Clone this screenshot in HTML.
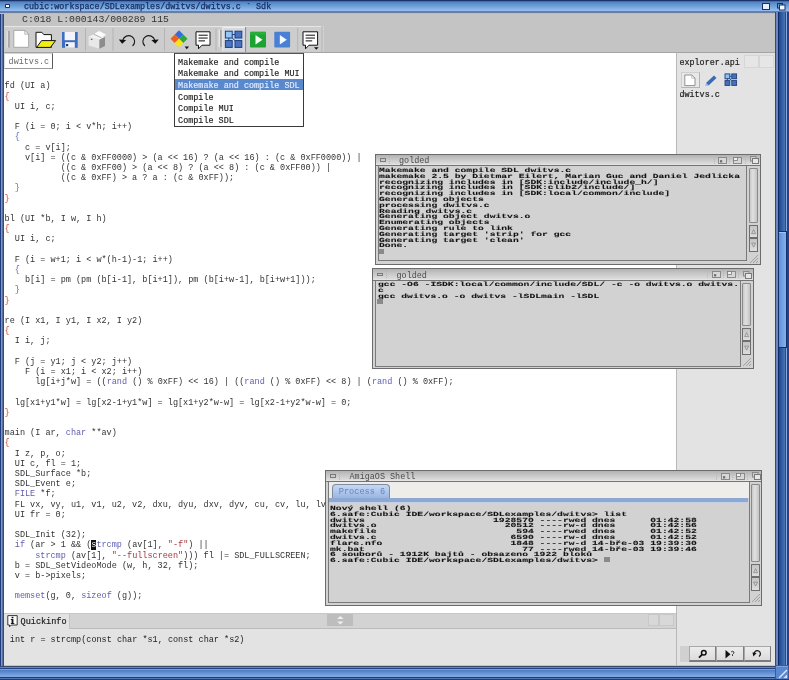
<!DOCTYPE html>
<html><head><meta charset="utf-8">
<style>
*{margin:0;padding:0;box-sizing:border-box}
html,body{width:789px;height:680px;overflow:hidden;background:#c4c4c4;font-family:"Liberation Mono",monospace}
.a{position:absolute}
pre{font-family:"Liberation Mono",monospace;white-space:pre}
/* main window frame */
#title{left:0;top:0;width:789px;height:13.5px;background:linear-gradient(#183470 0,#183470 1px,#5878b0 1.6px,#5a8cc4 3px,#6aa0dc 6px,#90b8ec 10px,#98bcf0 11px,#6a7ea0 11.4px,#6a7ea0 12.6px,#bcbcc8 13.2px)}
#lb{left:0;top:13px;width:4px;height:667px;background:linear-gradient(90deg,#1e3c80 0,#1e3c80 1px,#7898cc 1px,#7898cc 2.3px,#5a70a0 2.3px,#5a70a0 3.3px,#404a68 3.3px)}
#rb{left:775px;top:12px;width:14px;height:653px;background:linear-gradient(90deg,#3c4868 0,#3c4868 1px,#7088b8 1px,#7088b8 3px,#0c2c6a 3px,#0c2c6a 4px,#1a4890 4px,#4a74b4 10px,#2a4a90 10px,#2a4a90 11px,#88a8e0 11px,#88a8e0 12.5px,#2a4080 12.5px)}
#knob{left:778px;top:231.4px;width:9px;height:117px;border:1px solid #10306e;background:linear-gradient(#a0c4f8,#a0c4f8 1px,transparent 1px),linear-gradient(90deg,#6090d8,#8ab0ec)}
#bb{left:0;top:665.5px;width:775px;height:14.5px;background:linear-gradient(#3a4868 0,#3a4868 1px,#6a84b8 1px,#6a84b8 2px,#22448a 2px,#22448a 3px,#7aa0e0 3px,#7aa0e0 4px,#4e7cc4 4px,#78a2e0 9.5px,#80a8e8 10.5px,#1a3a80 10.5px,#1a3a80 12px,#5a78b0 12px,#5a78b0 13px,#1e3c80 13px)}
#status{left:4px;top:12px;width:771px;height:14px;background:#c4c4c4}
#toolbar{left:4px;top:26px;width:771px;height:27px;background:#c4c4c4;border-bottom:1px solid #a4a4a4}
#editor{left:4px;top:53px;width:672px;height:560px;background:#fff}
#explorer{left:676px;top:53px;width:99px;height:612px;background:#e3e3e3;border-left:1px solid #b8b8b8}
#qinfo{left:4px;top:613px;width:672px;height:52px;background:#e3e3e3;border-top:1px solid #c8c8c8}
.code{left:4.6px;top:81.3px;font-size:8.5px;line-height:10.21px;color:#333}
.k{color:#6060b0}.s{color:#a83a3a}.r{color:#c24a36}.b{color:#5a68b8}
</style></head><body><div id="root" style="position:absolute;left:0;top:0;width:789px;height:680px;will-change:transform;background:#c4c4c4">
<div id="lb" class="a"></div>
<div id="status" class="a"></div>
<div id="toolbar" class="a"></div>
<div id="editor" class="a"></div>
<div id="explorer" class="a"></div>
<div id="qinfo" class="a"></div>
<div id="title" class="a"></div>

<div class="a" style="left:4.8px;top:3.7px;width:5.2px;height:4.1px;background:#1a2f6a;border-radius:1px"></div>
<div class="a" style="left:5.7px;top:4.7px;width:3.6px;height:2px;background:#f4f8ff"></div>
<pre class="a" style="left:24px;top:1.8px;font-size:8.42px;line-height:10px;color:#162e66;-webkit-text-stroke:0.25px #162e66">cubic:workspace/SDLexamples/dwitvs/dwitvs.c ` Sdk</pre>
<svg class="a" style="left:755px;top:0" width="34" height="12">
 <rect x="762.5" y="3.5" width="7" height="6" transform="translate(-755 0)" fill="#e8eef8" stroke="#1a2f6a" stroke-width="1"/>
 <rect x="777.5" y="3.5" width="5" height="4.5" transform="translate(-755 0)" fill="none" stroke="#1a2f6a" stroke-width="1"/>
 <rect x="779.5" y="5" width="5.5" height="5" transform="translate(-755 0)" fill="#f4f8ff" stroke="#1a2f6a" stroke-width="1"/>
</svg>
<pre class="a" style="left:22px;top:14.3px;font-size:9.8px;line-height:12px;color:#333">C:018 L:000143/000289 115</pre>

<svg class="a" style="left:0;top:24px" width="330" height="30" viewBox="0 24 330 30">
 <!-- group box top highlight and right edge -->
 <rect x="4" y="26" width="318" height="26" fill="#cdcdcd"/>
 <line x1="4" y1="26.5" x2="322" y2="26.5" stroke="#e6e6e6" stroke-width="1"/>
 <line x1="322" y1="26" x2="322" y2="52" stroke="#b4b4b4" stroke-width="1"/>
 <line x1="323.2" y1="26" x2="323.2" y2="52" stroke="#d6d6d6" stroke-width="1"/>
 <!-- grip -->
 <rect x="7.9" y="30.9" width="2" height="16.7" fill="#a8a8a8"/>
 <rect x="6.5" y="30.9" width="1.2" height="16.7" fill="#e6e6e6"/>
 <!-- new doc -->
 <path d="M13.8 30.4 H24.8 L28.6 34.2 V47.3 H13.8 Z" fill="#fff" stroke="#9a9a9a" stroke-width="0.8"/>
 <path d="M24.8 30.4 V34.2 H28.6" fill="none" stroke="#9a9a9a" stroke-width="0.7"/>
 <!-- folder -->
 <path d="M36 32.3 H41.8 L43.8 34.6 H51.4 V47.4 H36 Z" fill="#fff" stroke="#111" stroke-width="1"/>
 <path d="M36.6 47.4 L41.6 40.6 H55.6 L50.4 47.4 Z" fill="#f2ee10" stroke="#111" stroke-width="1"/>
 <!-- floppy -->
 <rect x="62" y="32" width="15.7" height="15.8" fill="#3d6cc4"/>
 <rect x="64.6" y="32" width="10.4" height="8.2" fill="#f4f4f8"/>
 <rect x="65.2" y="42.2" width="9.6" height="5.6" fill="#f4f4f8"/>
 <rect x="66" y="44" width="2.2" height="2.2" fill="#1d3b78"/>
 <!-- box/printer -->
 <path d="M88.6 36.8 L94.5 33.8 L105 37 L99.4 39.8 Z" fill="#f2f2f2"/>
 <path d="M88.6 36.8 L99.4 39.8 L99.4 48.8 L88.6 45.6 Z" fill="#e6e9e8"/>
 <path d="M99.4 39.8 L105 37 L105 46 L99.4 48.8 Z" fill="#8c8c8c"/>
 <path d="M94.6 33.4 L99.2 31 L106.2 34.8 L101.6 37.2 Z" fill="#fdfdfd"/>
 <path d="M93.5 34.2 L101.6 37.8" stroke="#9a9a9a" stroke-width="0.7"/>
 <rect x="90.8" y="38.8" width="1.6" height="1.1" fill="#555"/>
 <line x1="85.5" y1="28" x2="85.5" y2="51" stroke="#b4b4b4" stroke-width="1"/>
 <line x1="113" y1="28" x2="113" y2="51" stroke="#b4b4b4" stroke-width="1"/>
 <!-- undo -->
 <path d="M122.8 40.2 A6 5.9 0 1 1 132.6 46" fill="none" stroke="#1a1a1a" stroke-width="1.1"/>
 <path d="M118.8 39.6 L126.2 40 L122.2 43.8 Z" fill="#111"/>
 <!-- redo -->
 <path d="M154.7 40.2 A6 5.9 0 1 0 144.9 46" fill="none" stroke="#1a1a1a" stroke-width="1.1"/>
 <path d="M158.7 39.6 L151.3 40 L155.3 43.8 Z" fill="#111"/>
 <line x1="164.5" y1="28" x2="164.5" y2="51" stroke="#b4b4b4" stroke-width="1"/>
 <!-- diamond -->
 <g transform="translate(179 38.8) rotate(45)">
  <rect x="-6" y="-6" width="6" height="6" fill="#3a6ad8"/>
  <rect x="0" y="-6" width="6" height="6" fill="#2aa83a"/>
  <rect x="-6" y="0" width="6" height="6" fill="#f0601c"/>
  <rect x="0" y="0" width="6" height="6" fill="#f4e418"/>
 </g>
 <path d="M184.6 46.6 H189 L186.8 49.2 Z" fill="#111"/>
 <!-- speech bubble -->
 <path d="M196 31.8 H210 V45.2 H202 L198.5 48.8 V45.2 H196 Z" fill="#fff" stroke="#111" stroke-width="1" stroke-linejoin="round"/>
 <rect x="198.5" y="34.6" width="9.2" height="1.3" fill="#444"/>
 <rect x="198.5" y="37.4" width="9.2" height="1.3" fill="#444"/>
 <rect x="198.5" y="40.2" width="6.5" height="1.3" fill="#444"/>
 <line x1="216" y1="28" x2="216" y2="51" stroke="#b4b4b4" stroke-width="1"/>
 <!-- grip 2 -->
 <rect x="218.6" y="30" width="1.4" height="17" fill="#e6e6e6"/>
 <rect x="220" y="30" width="1.8" height="17" fill="#a8a8a8"/>
 <!-- pressed frame -->
 <rect x="222.5" y="27" width="23" height="24.5" fill="#d6d9dd"/>
 <line x1="222.5" y1="27.5" x2="245.5" y2="27.5" stroke="#eeeeee"/>
 <line x1="222.8" y1="27" x2="222.8" y2="51.5" stroke="#eaeaea"/>
 <line x1="245.6" y1="27" x2="245.6" y2="52" stroke="#8a8a8a"/>
 <!-- blue grid -->
 <rect x="232.6" y="30.6" width="1.8" height="17.4" fill="#b4dcfa"/>
 <rect x="224.8" y="38.6" width="17.6" height="1.6" fill="#b4dcfa"/>
 <rect x="225.4" y="31.2" width="6.8" height="6.8" fill="#92c8f6" stroke="#1e3c7c" stroke-width="1"/>
 <rect x="235" y="31.2" width="6.8" height="6.8" fill="#4a72c0" stroke="#1e3c7c" stroke-width="1"/>
 <rect x="225.4" y="40.6" width="6.8" height="6.8" fill="#4a76c4" stroke="#1e3c7c" stroke-width="1"/>
 <rect x="235" y="40.6" width="6.8" height="6.8" fill="#4a72c0" stroke="#1e3c7c" stroke-width="1"/>
 <path d="M232.2 34.6 H235 M228.8 38 V40.6 M232.2 38 L235 40.6" stroke="#1e3c7c" stroke-width="1"/>
 <!-- green play -->
 <rect x="250" y="31.8" width="16" height="15.8" rx="1" fill="#1ea232"/>
 <rect x="250" y="31.8" width="16" height="3" fill="#2cb840" opacity="0.6"/>
 <path d="M255.5 35 L262.5 39.7 L255.5 44.4 Z" fill="#f2fff2"/>
 <!-- blue play -->
 <rect x="274.3" y="31.8" width="15.8" height="15.8" rx="1" fill="#4a80d4"/>
 <path d="M279.8 35 L286.8 39.7 L279.8 44.4 Z" fill="#f4f8ff"/>
 <line x1="297.7" y1="28" x2="297.7" y2="51" stroke="#b4b4b4" stroke-width="1"/>
 <!-- speech bubble 2 -->
 <path d="M303 31.8 H317.6 V45.2 H309 L305.5 48.8 V45.2 H303 Z" fill="#fff" stroke="#111" stroke-width="1" stroke-linejoin="round"/>
 <rect x="305.6" y="34.6" width="9.4" height="1.3" fill="#444"/>
 <rect x="305.6" y="37.4" width="9.4" height="1.3" fill="#444"/>
 <rect x="305.6" y="40.2" width="6.6" height="1.3" fill="#444"/>
 <path d="M314 47.2 H318.6 L316.3 49.8 Z" fill="#111"/>
</svg>

<!-- editor tab -->
<div class="a" style="left:4px;top:52.5px;width:48.5px;height:16.3px;background:#fff;border-top:1px solid #d4d4d4;border-left:1px solid #e0e0e0;border-right:1px solid #5a5a5a;border-bottom:1px solid #9a9a9a"></div>
<pre class="a" style="left:8.6px;top:56.8px;font-size:8.45px;line-height:10px;color:#6a6a6a">dwitvs.c</pre>

<!-- explorer contents -->
<pre class="a" style="left:679.5px;top:57.8px;font-size:8.4px;line-height:10px;color:#1e1e1e;-webkit-text-stroke:0.2px #1e1e1e">explorer.api</pre>
<div class="a" style="left:744px;top:54.7px;width:15px;height:13px;border:1px solid #d6d6d6;background:#e6e6e6"></div>
<div class="a" style="left:759px;top:54.7px;width:15px;height:13px;border:1px solid #d6d6d6;background:#e6e6e6"></div>
<div class="a" style="left:681px;top:72px;width:19px;height:15.7px;border:1px solid #cfcfcf;border-right-color:#b4b4b4;border-bottom-color:#b4b4b4;background:#e8e8e8"></div>
<svg class="a" style="left:676px;top:60px" width="99" height="40" viewBox="676 60 99 40">
 <path d="M684.8 75 H691.8 L695 78.2 V85.6 H684.8 Z" fill="#fff" stroke="#7a7a7a" stroke-width="0.8"/>
 <path d="M691.8 75 V78.2 H695" fill="none" stroke="#9a9a9a" stroke-width="0.6"/>
 <path d="M706 83 L714 75.5 L716.5 78 L708.5 85.5 Z" fill="#3a6ab8"/>
 <path d="M706 83 L708.5 85.5 L705.2 86.3 Z" fill="#9ab8e0"/>
 <rect x="729.9" y="73.2" width="1.6" height="12.8" fill="#b8dcf8"/>
 <rect x="724.4" y="78.8" width="12.6" height="1.4" fill="#b8dcf8"/>
 <rect x="725" y="73.9" width="4.8" height="4.8" fill="#8cc0f0" stroke="#22407e" stroke-width="0.9"/>
 <rect x="731.8" y="73.9" width="4.8" height="4.8" fill="#4870b8" stroke="#22407e" stroke-width="0.9"/>
 <rect x="725" y="80.6" width="4.8" height="4.8" fill="#4870b8" stroke="#22407e" stroke-width="0.9"/>
 <rect x="731.8" y="80.6" width="4.8" height="4.8" fill="#4870b8" stroke="#22407e" stroke-width="0.9"/>
 <path d="M729.8 76.3 H731.8 M727.4 78.7 V80.6 M729.8 78.7 L731.8 80.6" stroke="#22407e" stroke-width="0.9"/>
</svg>
<pre class="a" style="left:679.5px;top:90.3px;font-size:8.4px;line-height:10px;color:#1e1e1e;-webkit-text-stroke:0.2px #1e1e1e">dwitvs.c</pre>

<!-- bottom-right buttons -->
<div class="a" style="left:679.7px;top:646.3px;width:10px;height:16px;background:#d0d0d0"></div>
<div class="a" style="left:689px;top:646.3px;width:26.5px;height:16px;background:linear-gradient(#ececec,#dcdcdc);border:1px solid #7c7c7c;border-bottom-width:2px;border-right-width:1.5px;border-top-color:#a8a8a8;border-left-color:#a8a8a8"></div>
<div class="a" style="left:715.5px;top:646.3px;width:28px;height:16px;background:linear-gradient(#ececec,#dcdcdc);border:1px solid #7c7c7c;border-bottom-width:2px;border-right-width:1.5px;border-top-color:#a8a8a8;border-left-color:#a8a8a8"></div>
<div class="a" style="left:743.5px;top:646.3px;width:27.8px;height:16px;background:linear-gradient(#ececec,#dcdcdc);border:1px solid #7c7c7c;border-bottom-width:2px;border-right-width:1.5px;border-top-color:#a8a8a8;border-left-color:#a8a8a8"></div>
<svg class="a" style="left:689px;top:646px" width="83" height="17" viewBox="689 646 83 17">
 <circle cx="703.8" cy="652.8" r="2.3" fill="none" stroke="#111" stroke-width="1.5"/>
 <path d="M702.2 654.4 L699 657.6" stroke="#111" stroke-width="1.8"/>
 <path d="M725.5 650 L730.5 654.2 L725.5 658.4 Z" fill="#111"/>
 <path d="M731 652 Q732.5 650.5 734 652 Q734 653.5 732.5 654.5 V656" fill="none" stroke="#111" stroke-width="0.8"/>
 <path d="M754 654 A3.2 3.2 0 1 1 759 656.5" fill="none" stroke="#111" stroke-width="1.2"/>
 <path d="M752.5 652.5 L756.6 653 L753.4 656.4 Z" fill="#111"/>
</svg>

<!-- quickinfo header -->
<div class="a" style="left:69px;top:613.5px;width:607px;height:15px;background:#d3d3d3;border-bottom:1px solid #bcbcbc;border-left:1px solid #c4c4c4"></div>
<div class="a" style="left:327.4px;top:614.4px;width:25.8px;height:12px;background:#bdbdbd"></div>
<svg class="a" style="left:327px;top:614px" width="27" height="13" viewBox="327 614 27 13">
 <path d="M337 619 L340.3 616 L343.6 619 Z M337 621.6 L340.3 624.6 L343.6 621.6 Z" fill="#f0f0f0"/>
</svg>
<div class="a" style="left:647.5px;top:614px;width:11.5px;height:12.4px;border:1px solid #c8c8c8;background:#d8d8d8"></div>
<div class="a" style="left:659px;top:614px;width:15px;height:12.4px;border:1px solid #c8c8c8;background:#d8d8d8"></div>
<svg class="a" style="left:4px;top:613px" width="20" height="16" viewBox="4 613 20 16">
 <path d="M7.8 615.6 H17.2 V625 H11.2 L9.6 626.8 V625 H7.8 Z" fill="#fff" stroke="#222" stroke-width="0.9" stroke-linejoin="round"/>
 <rect x="11.6" y="616.8" width="1.8" height="1.5" fill="#111"/>
 <rect x="11.6" y="619" width="1.8" height="4.8" fill="#111"/>
 <rect x="10.8" y="619" width="1.2" height="0.9" fill="#111"/>
 <rect x="10.8" y="623" width="3.5" height="0.9" fill="#111"/>
</svg>
<pre class="a" style="left:20.6px;top:616.8px;font-size:8.5px;line-height:10px;color:#1e1e1e;-webkit-text-stroke:0.2px #1e1e1e">Quickinfo</pre>
<pre class="a" style="left:9.8px;top:634.5px;font-size:8.5px;line-height:10px;color:#222">int r = strcmp(const char *s1, const char *s2)</pre>

<!--WIN--><div class="a" style="left:375px;top:153.8px;width:385.6px;height:111.0px;background:#dadada;border:1px solid #6c6c6c"></div>
<div class="a" style="left:376px;top:154.8px;width:383.6px;height:10.3px;background:linear-gradient(#b2b2b2,#c6c6c6 40%,#dadada 85%,#e8e8e8)"></div>
<div class="a" style="left:376px;top:165.10000000000002px;width:383.6px;height:1px;background:#747474"></div>
<div class="a" style="left:380px;top:158.10000000000002px;width:5.8px;height:3.8px;border:1px solid #7a7a7a"></div>
<div class="a" style="left:388.8px;top:155.8px;width:1px;height:8px;border-left:1px dotted #b4b4b4"></div>
<div class="a" style="left:399px;top:156.0px;font-family:'Liberation Mono',monospace;font-size:8.45px;line-height:10px;color:#4a4a4a;white-space:pre">golded</div>
<div class="a" style="left:713.5px;top:155.8px;width:1px;height:8px;border-left:1px dotted #b8b8b8"></div>
<svg class="a" style="left:718px;top:156.60000000000002px" width="9" height="7"><rect x="0.5" y="0.5" width="8" height="6" fill="#d8d8d8" stroke="#8a8a8a"/><rect x="2" y="3.2" width="2.2" height="2.2" fill="#6a6a6a"/></svg>
<div class="a" style="left:728.5px;top:155.8px;width:1px;height:8px;border-left:1px dotted #b8b8b8"></div>
<svg class="a" style="left:733px;top:156.60000000000002px" width="9" height="7"><rect x="0.5" y="0.5" width="8" height="6" fill="#d8d8d8" stroke="#8a8a8a"/><rect x="0.5" y="0.5" width="4" height="3" fill="#f0f0f0" stroke="#7a7a7a" stroke-width="0.8"/></svg>
<div class="a" style="left:745.0px;top:155.8px;width:1px;height:8px;border-left:1px dotted #b8b8b8"></div>
<svg class="a" style="left:749.5px;top:156.0px" width="9" height="8"><rect x="0.5" y="0.5" width="5.5" height="4.5" fill="#d0d0d0" stroke="#8a8a8a"/><rect x="2.5" y="2.5" width="6" height="5" fill="#e6e6e6" stroke="#7a7a7a"/></svg>
<div class="a" style="left:376px;top:166.10000000000002px;width:383.6px;height:97.7px;background:#d2d2d2"></div>
<div class="a" style="left:377.6px;top:166.10000000000002px;width:369.69999999999993px;height:95.2px;border-left:1px solid #7a7a7a;border-bottom:1px solid #7a7a7a;border-right:1px solid #7a7a7a"></div>
<div class="a" style="left:749.2px;top:167.90000000000003px;width:8.6px;height:55.2px;border:1px solid #8a8a8a;border-radius:1px;background:linear-gradient(90deg,#c8c8c8,#e0e0e0 40%,#c4c4c4)"></div>
<div class="a" style="left:749.2px;top:224.60000000000002px;width:8.6px;height:13.5px;border:1px solid #6e6e6e;background:linear-gradient(#c4c4c4,#dedede)"></div>
<div class="a" style="left:749.2px;top:238.10000000000002px;width:8.6px;height:13.5px;border:1px solid #6e6e6e;background:linear-gradient(#c4c4c4,#dedede)"></div>
<svg class="a" style="left:748px;top:224.60000000000002px" width="12" height="27.0"><path d="M3.6 8.6 L5.6 4.6 L7.6 8.6 Z" fill="none" stroke="#8a8a8a" stroke-width="0.8"/><path d="M3.6 18.1 L5.6 22.1 L7.6 18.1 Z" fill="none" stroke="#8a8a8a" stroke-width="0.8"/></svg>
<svg class="a" style="left:748px;top:251.60000000000002px" width="12" height="12"><path d="M2 11 L10 3 M5 11 L10 6 M8 11 L10 9" stroke="#9a9a9a" stroke-width="0.9"/></svg>
<svg class="a" style="left:379.1px;top:165.5px;will-change:transform" width="408" height="93"><g transform="translate(0 6) scale(1 0.64)" text-rendering="geometricPrecision" font-family="Liberation Mono" font-weight="bold" font-size="9.715" fill="#111" stroke="#111" stroke-width="0.12"><text x="0" y="0.000" xml:space="preserve">Makemake and compile SDL dwitvs.c</text><text x="0" y="9.062" xml:space="preserve">makemake 2.5 by Dietmar Eilert, Marian Guc and Daniel Jedlicka</text><text x="0" y="18.125" xml:space="preserve">recognizing includes in [SDK:include/include_h/]</text><text x="0" y="27.187" xml:space="preserve">recognizing includes in [SDK:clib2/include/]</text><text x="0" y="36.250" xml:space="preserve">recognizing includes in [SDK:local/common/include]</text><text x="0" y="45.312" xml:space="preserve">Generating objects</text><text x="0" y="54.375" xml:space="preserve">processing dwitvs.c</text><text x="0" y="63.438" xml:space="preserve">Reading dwitvs.c</text><text x="0" y="72.500" xml:space="preserve">Generating object dwitvs.o</text><text x="0" y="81.562" xml:space="preserve">Enumerating objects</text><text x="0" y="90.625" xml:space="preserve">Generating rule to link</text><text x="0" y="99.688" xml:space="preserve">Generating target 'strip' for gcc</text><text x="0" y="108.750" xml:space="preserve">Generating target 'clean'</text><text x="0" y="117.812" xml:space="preserve">Done.</text></g></svg>
<div class="a" style="left:378.6px;top:249px;width:5.9px;height:5.2px;background:#8a8a8a"></div>
<div class="a" style="left:372.4px;top:268.4px;width:381.20000000000005px;height:100.80000000000001px;background:#dadada;border:1px solid #6c6c6c"></div>
<div class="a" style="left:373.4px;top:269.4px;width:379.20000000000005px;height:10.3px;background:linear-gradient(#b2b2b2,#c6c6c6 40%,#dadada 85%,#e8e8e8)"></div>
<div class="a" style="left:373.4px;top:279.7px;width:379.20000000000005px;height:1px;background:#747474"></div>
<div class="a" style="left:377.4px;top:272.7px;width:5.8px;height:3.8px;border:1px solid #7a7a7a"></div>
<div class="a" style="left:386.2px;top:270.4px;width:1px;height:8px;border-left:1px dotted #b4b4b4"></div>
<div class="a" style="left:396.5px;top:270.59999999999997px;font-family:'Liberation Mono',monospace;font-size:8.45px;line-height:10px;color:#4a4a4a;white-space:pre">golded</div>
<div class="a" style="left:707.0px;top:270.4px;width:1px;height:8px;border-left:1px dotted #b8b8b8"></div>
<svg class="a" style="left:711.5px;top:271.2px" width="9" height="7"><rect x="0.5" y="0.5" width="8" height="6" fill="#d8d8d8" stroke="#8a8a8a"/><rect x="2" y="3.2" width="2.2" height="2.2" fill="#6a6a6a"/></svg>
<div class="a" style="left:722.5px;top:270.4px;width:1px;height:8px;border-left:1px dotted #b8b8b8"></div>
<svg class="a" style="left:727px;top:271.2px" width="9" height="7"><rect x="0.5" y="0.5" width="8" height="6" fill="#d8d8d8" stroke="#8a8a8a"/><rect x="0.5" y="0.5" width="4" height="3" fill="#f0f0f0" stroke="#7a7a7a" stroke-width="0.8"/></svg>
<div class="a" style="left:738.0px;top:270.4px;width:1px;height:8px;border-left:1px dotted #b8b8b8"></div>
<svg class="a" style="left:742.5px;top:270.59999999999997px" width="9" height="8"><rect x="0.5" y="0.5" width="5.5" height="4.5" fill="#d0d0d0" stroke="#8a8a8a"/><rect x="2.5" y="2.5" width="6" height="5" fill="#e6e6e6" stroke="#7a7a7a"/></svg>
<div class="a" style="left:373.4px;top:280.7px;width:379.20000000000005px;height:87.50000000000001px;background:#d2d2d2"></div>
<div class="a" style="left:375.0px;top:280.7px;width:365.5px;height:86.10000000000004px;border-left:1px solid #7a7a7a;border-bottom:1px solid #7a7a7a;border-right:1px solid #7a7a7a"></div>
<div class="a" style="left:742.2px;top:282.5px;width:8.6px;height:43.500000000000014px;border:1px solid #8a8a8a;border-radius:1px;background:linear-gradient(90deg,#c8c8c8,#e0e0e0 40%,#c4c4c4)"></div>
<div class="a" style="left:742.2px;top:327.5px;width:8.6px;height:13.5px;border:1px solid #6e6e6e;background:linear-gradient(#c4c4c4,#dedede)"></div>
<div class="a" style="left:742.2px;top:341.0px;width:8.6px;height:13.5px;border:1px solid #6e6e6e;background:linear-gradient(#c4c4c4,#dedede)"></div>
<svg class="a" style="left:741px;top:327.5px" width="12" height="27.0"><path d="M3.6 8.6 L5.6 4.6 L7.6 8.6 Z" fill="none" stroke="#8a8a8a" stroke-width="0.8"/><path d="M3.6 18.1 L5.6 22.1 L7.6 18.1 Z" fill="none" stroke="#8a8a8a" stroke-width="0.8"/></svg>
<svg class="a" style="left:741px;top:354.5px" width="12" height="12"><path d="M2 11 L10 3 M5 11 L10 6 M8 11 L10 9" stroke="#9a9a9a" stroke-width="0.9"/></svg>
<svg class="a" style="left:377.8px;top:280.1px;will-change:transform" width="408" height="29"><g transform="translate(0 6) scale(1 0.64)" text-rendering="geometricPrecision" font-family="Liberation Mono" font-weight="bold" font-size="9.715" fill="#111" stroke="#111" stroke-width="0.12"><text x="0" y="0.000" xml:space="preserve">gcc -O6 -ISDK:local/common/include/SDL/ -c -o dwitvs.o dwitvs.</text><text x="0" y="9.062" xml:space="preserve">c</text><text x="0" y="18.125" xml:space="preserve">gcc dwitvs.o -o dwitvs -lSDLmain -lSDL</text></g></svg>
<div class="a" style="left:377.3px;top:299px;width:5.9px;height:5.2px;background:#8a8a8a"></div>
<div class="a" style="left:325.1px;top:470px;width:437.4px;height:135.60000000000002px;background:#dadada;border:1px solid #6c6c6c"></div>
<div class="a" style="left:326.1px;top:471px;width:435.4px;height:10.3px;background:linear-gradient(#b2b2b2,#c6c6c6 40%,#dadada 85%,#e8e8e8)"></div>
<div class="a" style="left:326.1px;top:481.3px;width:435.4px;height:1px;background:#747474"></div>
<div class="a" style="left:330.1px;top:474.3px;width:5.8px;height:3.8px;border:1px solid #7a7a7a"></div>
<div class="a" style="left:338.90000000000003px;top:472px;width:1px;height:8px;border-left:1px dotted #b4b4b4"></div>
<div class="a" style="left:349.5px;top:472.2px;font-family:'Liberation Mono',monospace;font-size:8.45px;line-height:10px;color:#4a4a4a;white-space:pre">AmigaOS Shell</div>
<div class="a" style="left:716.0px;top:472px;width:1px;height:8px;border-left:1px dotted #b8b8b8"></div>
<svg class="a" style="left:720.5px;top:472.8px" width="9" height="7"><rect x="0.5" y="0.5" width="8" height="6" fill="#d8d8d8" stroke="#8a8a8a"/><rect x="2" y="3.2" width="2.2" height="2.2" fill="#6a6a6a"/></svg>
<div class="a" style="left:731.5px;top:472px;width:1px;height:8px;border-left:1px dotted #b8b8b8"></div>
<svg class="a" style="left:736px;top:472.8px" width="9" height="7"><rect x="0.5" y="0.5" width="8" height="6" fill="#d8d8d8" stroke="#8a8a8a"/><rect x="0.5" y="0.5" width="4" height="3" fill="#f0f0f0" stroke="#7a7a7a" stroke-width="0.8"/></svg>
<div class="a" style="left:747.0px;top:472px;width:1px;height:8px;border-left:1px dotted #b8b8b8"></div>
<svg class="a" style="left:751.5px;top:472.2px" width="9" height="8"><rect x="0.5" y="0.5" width="5.5" height="4.5" fill="#d0d0d0" stroke="#8a8a8a"/><rect x="2.5" y="2.5" width="6" height="5" fill="#e6e6e6" stroke="#7a7a7a"/></svg>
<div class="a" style="left:326.1px;top:482px;width:435.4px;height:122.60000000000002px;background:#d2d2d2"></div>
<div class="a" style="left:327.70000000000005px;top:482px;width:422.0999999999999px;height:16px;background:#efedea"></div>
<div class="a" style="left:331.7px;top:484.3px;width:58.5px;height:15px;border:1px solid #7f8ba0;border-bottom:none;border-radius:4px 4px 0 0;background:linear-gradient(#c6d8f2,#a8c2ea 60%,#98b2e0)"></div>
<div class="a" style="left:338.8px;top:487.2px;font-family:'Liberation Mono',monospace;font-size:8.6px;line-height:10px;color:#6684b8;white-space:pre">Process 6</div>
<div class="a" style="left:327.70000000000005px;top:498px;width:420.0999999999999px;height:5.4px;background:#8ea8d4;border-bottom:1px solid #c4d0e4"></div>
<div class="a" style="left:327.70000000000005px;top:482px;width:422.0999999999999px;height:120.60000000000002px;border-left:1px solid #7a7a7a;border-bottom:1px solid #7a7a7a;border-right:1px solid #7a7a7a"></div>
<div class="a" style="left:751.2px;top:483.8px;width:8.6px;height:78.2px;border:1px solid #8a8a8a;border-radius:1px;background:linear-gradient(90deg,#c8c8c8,#e0e0e0 40%,#c4c4c4)"></div>
<div class="a" style="left:751.2px;top:563.5px;width:8.6px;height:13.5px;border:1px solid #6e6e6e;background:linear-gradient(#c4c4c4,#dedede)"></div>
<div class="a" style="left:751.2px;top:577.0px;width:8.6px;height:13.5px;border:1px solid #6e6e6e;background:linear-gradient(#c4c4c4,#dedede)"></div>
<svg class="a" style="left:750px;top:563.5px" width="12" height="27.0"><path d="M3.6 8.6 L5.6 4.6 L7.6 8.6 Z" fill="none" stroke="#8a8a8a" stroke-width="0.8"/><path d="M3.6 18.1 L5.6 22.1 L7.6 18.1 Z" fill="none" stroke="#8a8a8a" stroke-width="0.8"/></svg>
<svg class="a" style="left:750px;top:590.5px" width="12" height="12"><path d="M2 11 L10 3 M5 11 L10 6 M8 11 L10 9" stroke="#9a9a9a" stroke-width="0.9"/></svg>
<svg class="a" style="left:329.7px;top:504.0px;will-change:transform" width="408" height="69"><g transform="translate(0 6) scale(1 0.64)" text-rendering="geometricPrecision" font-family="Liberation Mono" font-weight="bold" font-size="9.715" fill="#111" stroke="#111" stroke-width="0.12"><text x="0" y="0.000" xml:space="preserve">Nový shell (6)</text><text x="0" y="9.062" xml:space="preserve">6.safe:Cubic IDE/workspace/SDLexamples/dwitvs&gt; list</text><text x="0" y="18.125" xml:space="preserve">dwitvs                      1928570 ----rwed dnes      01:42:58</text><text x="0" y="27.187" xml:space="preserve">dwitvs.o                      20512 ----rw-d dnes      01:42:56</text><text x="0" y="36.250" xml:space="preserve">makefile                        594 ----rwed dnes      01:42:52</text><text x="0" y="45.312" xml:space="preserve">dwitvs.c                       6590 ----rw-d dnes      01:42:52</text><text x="0" y="54.375" xml:space="preserve">flare.nfo                      1848 ----rw-d 14-bře-03 19:39:30</text><text x="0" y="63.438" xml:space="preserve">mk.bat                           77 ----rwed 14-bře-03 19:39:46</text><text x="0" y="72.500" xml:space="preserve">6 souborů - 1912K bajtů - obsazeno 1922 bloků</text><text x="0" y="81.562" xml:space="preserve">6.safe:Cubic IDE/workspace/SDLexamples/dwitvs&gt; </text></g></svg>
<div class="a" style="left:604.3px;top:557px;width:5.9px;height:5.2px;background:#8a8a8a"></div><!--/WIN-->
<!-- dropdown menu -->
<div class="a" style="left:174px;top:53.3px;width:130.3px;height:73.7px;background:#fff;border:1px solid #3a3a3a;border-top-color:#555"></div>
<div class="a" style="left:175px;top:79px;width:128.3px;height:11px;background:#5a88cc"></div>
<pre class="a" style="left:178.1px;top:57.8px;font-size:8.45px;line-height:11.66px;color:#1a1a1a;-webkit-text-stroke:0.15px #1a1a1a">Makemake and compile
Makemake and compile MUI
<span style="color:#e4ecfa;-webkit-text-stroke:0.15px #e4ecfa">Makemake and compile SDL</span>
Compile
Compile MUI
Compile SDL</pre>
<div id="rb" class="a"></div>
<div id="knob" class="a"></div>
<div id="bb" class="a"></div>
<svg id="size" class="a" style="left:775px;top:665px" width="14" height="15" viewBox="0 0 14 15">
 <rect x="0" y="0" width="14" height="15" fill="#3a5a98"/>
 <rect x="1" y="1" width="12" height="13" fill="#5a88d0"/>
 <rect x="1" y="1" width="12" height="1" fill="#7aa4e4"/>
 <path d="M4 13 L12 5" stroke="#dce8fa" stroke-width="1.4"/>
 <path d="M8.5 13 L12 9.5 L12 13 Z" fill="#dce8fa"/>
 <rect x="0" y="14" width="14" height="1" fill="#1e3c80"/>
</svg>

<pre class="a code">fd (UI a)
<span class="r">{</span>
  UI i, c;

  F (i = 0; i &lt; v*h; i++)
  <span class="b">{</span>
    c = v[i];
    v[i] = ((c &amp; 0xFF0000) &gt; (a &lt;&lt; 16) ? (a &lt;&lt; 16) : (c &amp; 0xFF0000)) |
           ((c &amp; 0xFF00) &gt; (a &lt;&lt; 8) ? (a &lt;&lt; 8) : (c &amp; 0xFF00)) |
           ((c &amp; 0xFF) &gt; a ? a : (c &amp; 0xFF));
  <span class="b">}</span>
<span class="r">}</span>

bl (UI *b, I w, I h)
<span class="r">{</span>
  UI i, c;

  F (i = w+1; i &lt; w*(h-1)-1; i++)
  <span class="b">{</span>
    b[i] = pm (pm (b[i-1], b[i+1]), pm (b[i+w-1], b[i+w+1]));
  <span class="b">}</span>
<span class="r">}</span>

re (I x1, I y1, I x2, I y2)
<span class="r">{</span>
  I i, j;

  F (j = y1; j &lt; y2; j++)
    F (i = x1; i &lt; x2; i++)
      lg[i+j*w] = ((<span class="k">rand</span> () % 0xFF) &lt;&lt; 16) | ((<span class="k">rand</span> () % 0xFF) &lt;&lt; 8) | (<span class="k">rand</span> () % 0xFF);

  lg[x1+y1*w] = lg[x2-1+y1*w] = lg[x1+y2*w-w] = lg[x2-1+y2*w-w] = 0;
<span class="r">}</span>

main (I ar, <span class="k">char</span> **av)
<span class="r">{</span>
  I z, p, o;
  UI c, fl = 1;
  SDL_Surface *b;
  SDL_Event e;
  <span class="k">FILE</span> *f;
  FL vx, vy, u1, v1, u2, v2, dxu, dyu, dxv, dyv, cu, cv, lu, lv
  UI fr = 0;

  SDL_Init (32);
  <span class="k">if</span> (ar &gt; 1 &amp;&amp; (<span class="k"><span style="background:#111;color:#fff">s</span>trcmp</span> (av[1], <span class="s">"-f"</span>) ||
      <span class="k">strcmp</span> (av[1], <span class="s">"--fullscreen"</span>))) fl |= SDL_FULLSCREEN;
  b = SDL_SetVideoMode (w, h, 32, fl);
  v = b-&gt;pixels;

  <span class="k">memset</span>(g, 0, <span class="k">sizeof</span> (g));
</pre>

</div></body></html>
